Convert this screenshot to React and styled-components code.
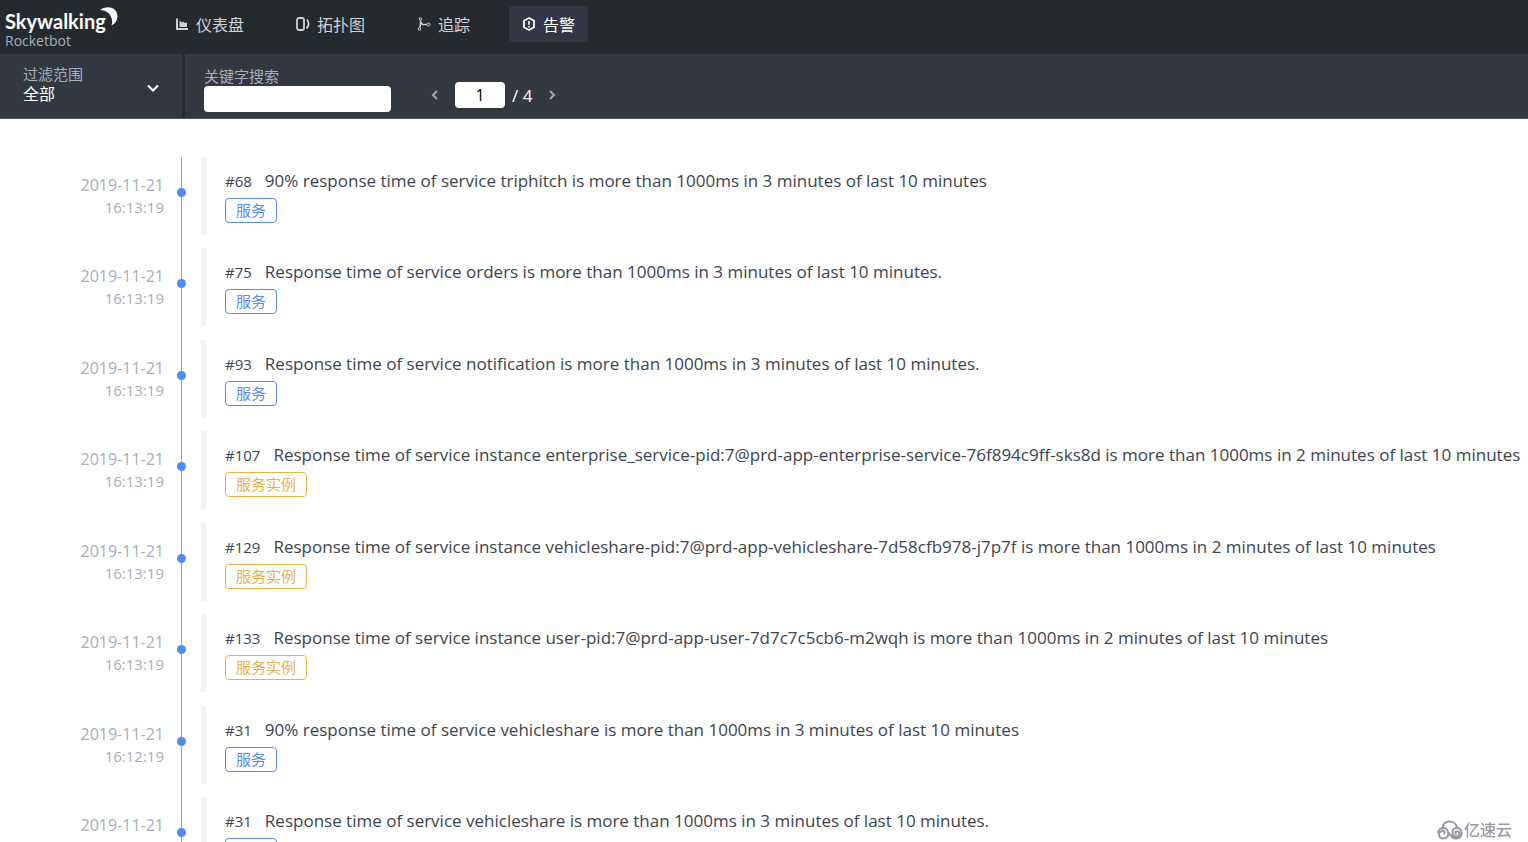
import React, { useState } from "react";
import styled, { createGlobalStyle } from "styled-components";

const GlobalStyle = createGlobalStyle`
  *, *::before, *::after { box-sizing: border-box; }
  body {
    margin: 0;
    background: #fff;
    color: #3d444f;
    font-family: "Open Sans", "Noto Sans CJK SC", sans-serif;
    font-size: 16px;
  }
  button, input, select { font: inherit; }
`;

const Page = styled.div`
  display: flex;
  flex-direction: column;
  height: 100vh;
  overflow: hidden;
`;

const Header = styled.header`
  display: flex;
  align-items: flex-start;
  flex: none;
  height: 54px;
  padding: 6px 5px;
  background: #252a2f;
`;

const Brand = styled.a`
  width: 157px;
  color: #fff;
  text-decoration: none;
`;

const BrandRow = styled.span`
  display: flex;
  align-items: flex-start;
  height: 26px;
`;

const BrandName = styled.span`
  font-family: Lato, sans-serif;
  font-size: 20px;
  font-weight: 700;
  line-height: 30px;
`;

const Moon = styled.svg`
  width: 19px;
  height: 22px;
  margin-left: -7px;
`;

const BrandSub = styled.span`
  display: block;
  color: #a7aebb;
  font-size: 14px;
  line-height: 18px;
`;

const Nav = styled.nav`
  display: flex;
  gap: 26px;
`;

const NavLink = styled.a`
  display: flex;
  align-items: center;
  gap: 7px;
  height: 36px;
  padding: 0 13px;
  border-radius: 4px;
  color: ${(p) => (p.$active ? "#fff" : "#d0d1d4")};
  background: ${(p) => (p.$active ? "#333743" : "transparent")};
  text-decoration: none;
`;

const NavIcon = styled.svg`
  width: 14px;
  height: 14px;
  fill: none;
  stroke: currentColor;
`;

const Toolbar = styled.div`
  display: flex;
  flex: none;
  height: 65px;
  background: #333840;
  border-bottom: 1px solid #555962;
`;

const Scope = styled.div`
  display: flex;
  align-items: flex-start;
  justify-content: space-between;
  width: 185px;
  padding: 10px 23px 0;
  border-right: 3px solid #252a2f;
`;

const Label = styled.label`
  display: block;
  color: #a7aebb;
  font-size: 15px;
  line-height: 20px;
`;

const ScopeSelect = styled.select`
  display: block;
  appearance: none;
  padding: 0;
  border: 0;
  background: transparent;
  color: #fff;
  line-height: 20px;
`;

const Chevron = styled.svg`
  width: ${(p) => p.$size}px;
  height: ${(p) => p.$size}px;
  fill: none;
  stroke: currentColor;
  color: ${(p) => p.$color};
  stroke-width: 2;
  margin-top: ${(p) => p.$drop || 0}px;
`;

const Search = styled.div`
  width: 187px;
  margin: 12px 36px 0 19px;
`;

const TextBox = styled.input`
  display: block;
  width: ${(p) => p.$width};
  height: 26px;
  padding: 2px 6px;
  border: 0;
  border-radius: 4px;
  background: #fff;
  color: #000;
  text-align: ${(p) => p.$align || "left"};
`;

const Pager = styled.div`
  display: flex;
  align-items: center;
  height: 26px;
  margin-top: 28px;
  color: #fff;
`;

const PageInputWrap = styled.div`
  margin-left: 12px;
`;

const PageButton = styled.button`
  display: flex;
  align-items: center;
  justify-content: center;
  width: 16px;
  height: 26px;
  padding: 0;
  border: 0;
  background: transparent;
`;

const PageTotal = styled.span`
  padding: 0 12px 0 7px;
  font-size: 17px;
`;

const Timeline = styled.ol`
  flex: 1;
  min-height: 0;
  margin: 0;
  padding: 38px 0 0;
  list-style: none;
  overflow: auto;
  scrollbar-width: none;
`;

const Alarm = styled.li`
  display: grid;
  grid-template-columns: 164px 35px 1fr;
  height: 91px;
  &:nth-child(even) { height: 92px; }
`;

const Time = styled.time`
  padding-top: 17px;
  color: #a7aebb;
  font-size: 15px;
  line-height: 22px;
  text-align: right;
`;

const DateLine = styled.span`
  display: block;
  font-size: 16px;
`;

const ClockLine = styled.span`
  display: block;
`;

const Rail = styled.div`
  display: flex;
  justify-content: center;
  align-items: flex-start;
  background: linear-gradient(#83acd8, #83acd8) 17px 0 / 1px 100% no-repeat;
`;

const Dot = styled.span`
  width: 9px;
  height: 9px;
  margin-top: 31px;
  border-radius: 50%;
  background: #4f8bf5;
`;

const Detail = styled.div`
  height: 78px;
  margin-left: 2px;
  padding: 12px 0 0 19px;
  border-left: 5px solid #f2f3f4;
  white-space: nowrap;
`;

const Message = styled.div`
  display: flex;
  align-items: baseline;
  gap: 13px;
  font-size: 17px;
  line-height: 24px;
`;

const AlarmId = styled.span`
  font-size: 15px;
`;

const Tag = styled.span`
  display: inline-block;
  height: 25px;
  margin-top: 5px;
  padding: 0 10px;
  border: 1px solid currentColor;
  border-radius: 4px;
  color: ${(p) => (p.$instance ? "#e8b04a" : "#5a8de8")};
  font-size: 15px;
  line-height: 23px;
`;

const Watermark = styled.div`
  position: fixed;
  right: 16px;
  bottom: 1px;
  display: flex;
  align-items: center;
  gap: 1px;
  color: #9499a3;
  font-size: 16px;
  font-weight: 500;
  line-height: 22px;
`;

const CloudIcon = styled.svg`
  width: 26px;
  height: 20px;
  fill: none;
  stroke: currentColor;
  stroke-width: 2;
  stroke-linecap: round;
`;

const icons = {
  chart: (
    <>
      <path d="M2 1.5V12h11" strokeWidth="2" />
      <path d="M4.5 10V3.5l2 2 1.5-1 2 1.5 2-.5V10z" fill="currentColor" stroke="none" />
    </>
  ),
  topology: (
    <>
      <rect x="1" y="1" width="7" height="12" rx="2" strokeWidth="1.8" />
      <path d="M11 2.500c2.300 2.500 2 6.500-.5 9" strokeWidth="1.8" />
    </>
  ),
  trace: (
    <>
      <circle cx="3.5" cy="2" r="1.3" />
      <circle cx="2.5" cy="12" r="1.3" />
      <circle cx="11.5" cy="7.5" r="1.5" />
      <path d="M3.5 3.5v4.500L2.800 10.500M3.800 5.500l2 2h4" strokeWidth="1.600" />
    </>
  ),
  alarm: (
    <>
      <path d="M7 1l5 2.700v6.600L7 13l-5-2.700V3.700z" strokeWidth="1.800" strokeLinejoin="round" />
      <path d="M7 4v3.800M7 9v1.500" strokeWidth="1.600" />
    </>
  ),
};

const navItems = [
  ["chart", "仪表盘"],
  ["topology", "拓扑图"],
  ["trace", "追踪"],
  ["alarm", "告警"],
];

const alarms = [
  ["68", "16:13:19", "90% response time of service triphitch is more than 1000ms in 3 minutes of last 10 minutes"],
  ["75", "16:13:19", "Response time of service orders is more than 1000ms in 3 minutes of last 10 minutes."],
  ["93", "16:13:19", "Response time of service notification is more than 1000ms in 3 minutes of last 10 minutes."],
  ["107", "16:13:19", "Response time of service instance enterprise_service-pid:7@prd-app-enterprise-service-76f894c9ff-sks8d is more than 1000ms in 2 minutes of last 10 minutes", true],
  ["129", "16:13:19", "Response time of service instance vehicleshare-pid:7@prd-app-vehicleshare-7d58cfb978-j7p7f is more than 1000ms in 2 minutes of last 10 minutes", true],
  ["133", "16:13:19", "Response time of service instance user-pid:7@prd-app-user-7d7c7c5cb6-m2wqh is more than 1000ms in 2 minutes of last 10 minutes", true],
  ["31", "16:12:19", "90% response time of service vehicleshare is more than 1000ms in 3 minutes of last 10 minutes"],
  ["31", "16:12:19", "Response time of service vehicleshare is more than 1000ms in 3 minutes of last 10 minutes."],
];

export default function App() {
  const [page, setPage] = useState(1);
  const [keyword, setKeyword] = useState("");
  return (
    <Page>
      <GlobalStyle />
      <Header>
        <Brand href="#">
          <BrandRow>
            <BrandName>Skywalking</BrandName>
            <Moon viewBox="0 0 19 22" aria-hidden="true">
              <path d="M1 4C8-1 18 1 18.5 10c0 5-3 8-6 9.500C15 12 10 4 1 4z" fill="#fff" />
            </Moon>
          </BrandRow>
          <BrandSub>Rocketbot</BrandSub>
        </Brand>
        <Nav>
          {navItems.map(([icon, text]) => (
            <NavLink key={icon} href={"#" + icon} $active={icon === "alarm"}>
              <NavIcon viewBox="0 0 14 14" aria-hidden="true">{icons[icon]}</NavIcon>
              {text}
            </NavLink>
          ))}
        </Nav>
      </Header>
      <Toolbar>
        <Scope>
          <div>
            <Label htmlFor="scope">过滤范围</Label>
            <ScopeSelect id="scope">
              <option>全部</option>
            </ScopeSelect>
          </div>
          <Chevron $size={12} $color="#fff" $drop={18} viewBox="0 0 12 12" aria-hidden="true">
            <path d="M1 3.5l5 5 5-5" />
          </Chevron>
        </Scope>
        <Search>
          <Label htmlFor="keyword">关键字搜索</Label>
          <TextBox id="keyword" $width="100%" value={keyword} onChange={(e) => setKeyword(e.target.value)} />
        </Search>
        <Pager>
          <PageButton aria-label="上一页" onClick={() => setPage(Math.max(1, page - 1))}>
            <Chevron $size={10} $color="#a0a4ac" viewBox="0 0 10 10"><path d="M7 1L3 5l4 4" /></Chevron>
          </PageButton>
          <PageInputWrap>
            <TextBox aria-label="页码" $width="50px" $align="center" value={page} onChange={(e) => setPage(Number(e.target.value) || 1)} />
          </PageInputWrap>
          <PageTotal>/ 4</PageTotal>
          <PageButton aria-label="下一页" onClick={() => setPage(Math.min(4, page + 1))}>
            <Chevron $size={10} $color="#a0a4ac" viewBox="0 0 10 10"><path d="M3 1l4 4-4 4" /></Chevron>
          </PageButton>
        </Pager>
      </Toolbar>
      <Timeline>
        {alarms.map(([id, time, text, instance], i) => (
          <Alarm key={i}>
            <Time>
              <DateLine>2019-11-21</DateLine>
              <ClockLine>{time}</ClockLine>
            </Time>
            <Rail><Dot /></Rail>
            <Detail>
              <Message>
                <AlarmId>#{id}</AlarmId>
                <span>{text}</span>
              </Message>
              <Tag $instance={instance}>{instance ? "服务实例" : "服务"}</Tag>
            </Detail>
          </Alarm>
        ))}
      </Timeline>
      <Watermark>
        <CloudIcon viewBox="0 0 26 20" aria-hidden="true">
          <path d="M5.5 8C6 4 8.500 1.500 12.500 1.500S19.500 4 20 7.500" />
          <path d="M7 13.500c1.500-1.500 0-3-1.800-2.500C.5 12 1 18.500 6.500 18.500c7 0 5.500-10 .5-10.500-2.500 0-5 .5-5.800 4" />
          <path d="M19 14c-1.500-1.500 0-3.500 2-2.500 2.500 1.200 1.500 5-1.500 5-5 0-5.500-8 0-8.500 6.500-.5 7.500 10.500-.5 10.500-4 0-5-3-7-5.500" />
        </CloudIcon>
        亿速云
      </Watermark>
    </Page>
  );
}
